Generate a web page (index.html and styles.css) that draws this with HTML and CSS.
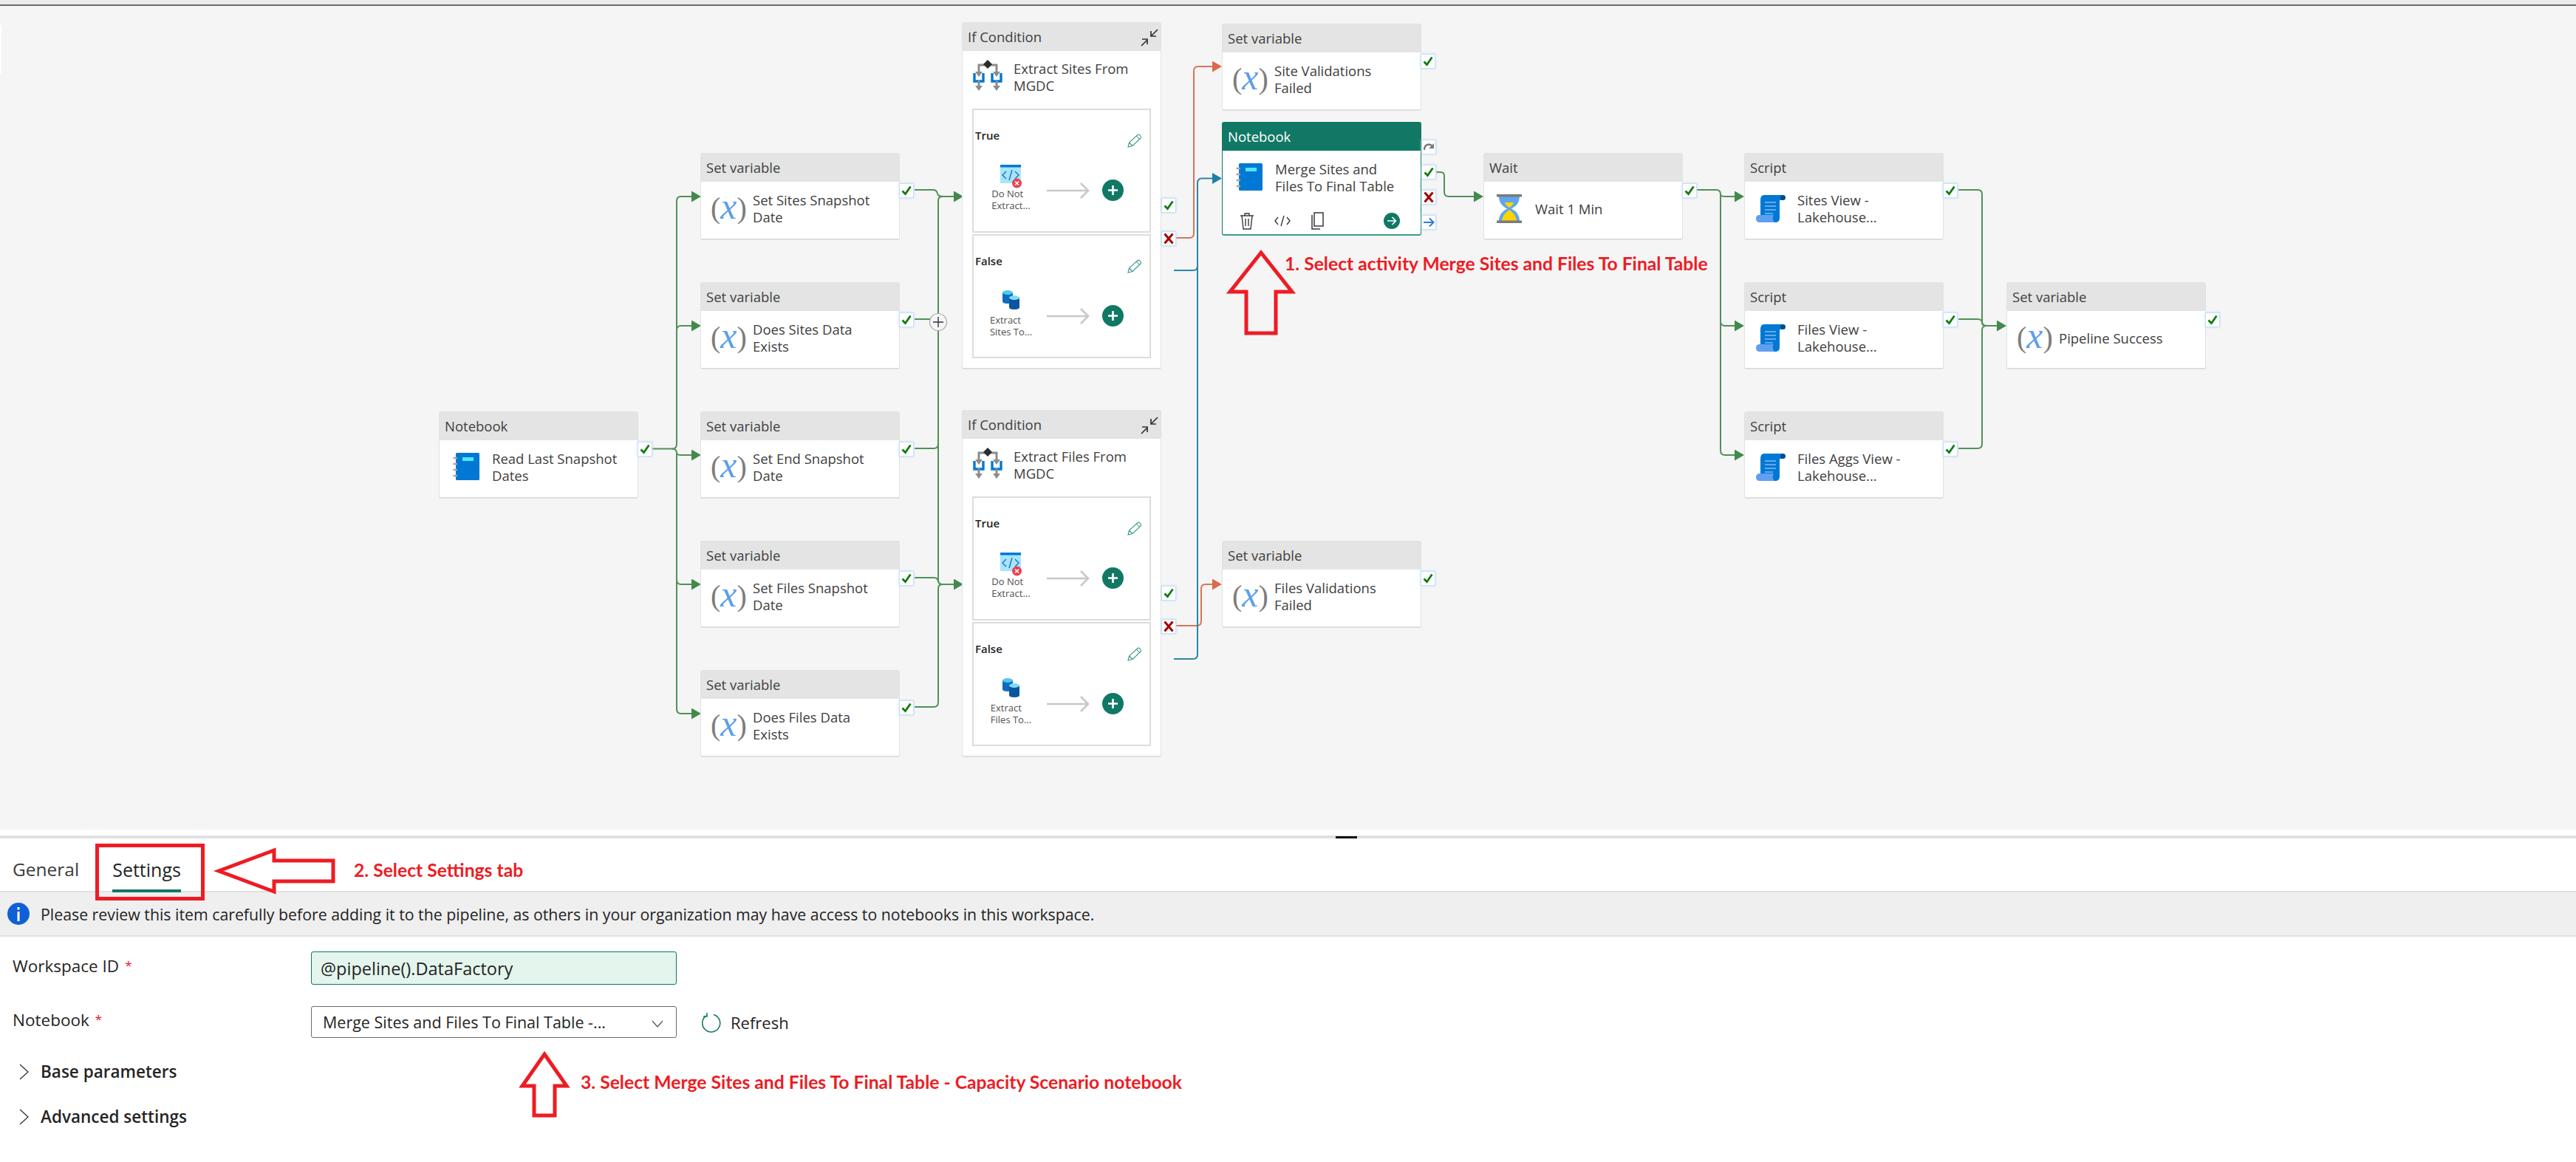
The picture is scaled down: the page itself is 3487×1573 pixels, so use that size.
FILE: index.html
```html
<!DOCTYPE html>
<html lang="en">
<head>
    <meta charset="UTF-8">
    <title>Pipeline editor</title>
    <link rel="stylesheet" href="styles.css">
</head>
<body>

    <!-- Icon sprite -->
    <svg class="sprite" width="0" height="0">
        <symbol id="i-notebook" viewBox="0 0 36 38">
            <rect x="4" y="0" width="32" height="37" rx="1.5" fill="#0078d4"/>
            <rect x="13" y="6" width="15" height="5" fill="#50e6ff"/>
            <path d="M0.5 7H6M0.5 15H6M0.5 23H6M0.5 31H6" stroke="#a6a6a6" stroke-width="2.6"/>
        </symbol>
        <symbol id="i-script" viewBox="0 0 40 38">
            <path d="M11 1H37V8H32V32Q32 38 26 38H6V8Q6 1 11 1Z" fill="#0078d4"/>
            <circle cx="36.5" cy="4.5" r="3.5" fill="#004e8c"/>
            <path d="M12 11H27M12 16H27M12 21H27M12 26H23" stroke="#83b9f9" stroke-width="1.6"/>
            <path d="M5 28H24Q21 33 25 38H5Q0 38 0 33Q0 28 5 28Z" fill="#5e9ff0"/>
        </symbol>
        <symbol id="i-hourglass" viewBox="0 0 34 39">
            <path d="M3 3H31Q31 14 20 19.5Q31 25 31 36H3Q3 25 14 19.5Q3 14 3 3Z" fill="#5ea6ee"/>
            <path d="M11 11H23Q22 15 17 18Q12 15 11 11Z" fill="#ffd400"/>
            <path d="M17 21Q26 27 27 36H7Q8 27 17 21Z" fill="#ffd400"/>
            <rect width="34" height="3.5" fill="#7a7a7a"/>
            <rect y="35.5" width="34" height="3.5" fill="#7a7a7a"/>
        </symbol>
        <symbol id="i-ifcond" viewBox="0 0 40 42">
            <path d="M8 18V7H32V18" fill="none" stroke="#8c8c8c" stroke-width="3"/>
            <path d="M3 16H13L8 23ZM27 16H37L32 23Z" fill="#8c8c8c"/>
            <path d="M20 0L26 6L20 12L14 6Z" fill="#2b2b2b"/>
            <path d="M2 18V29H14V18M26 18V29H38V18" fill="none" stroke="#0078d4" stroke-width="3.4"/>
            <path d="M8 28V36M32 28V36" stroke="#8c8c8c" stroke-width="3"/>
            <path d="M3 35H13L8 42ZM27 35H37L32 42Z" fill="#8c8c8c"/>
        </symbol>
        <symbol id="i-code" viewBox="0 0 29 32">
            <rect y="0" width="28" height="25" fill="#a6e5fb"/>
            <rect y="0" width="28" height="3.5" fill="#0078d4"/>
            <path d="M8 9L3 14L8 19M20 9L25 14L20 19M16 7L12 21" fill="none" stroke="#1a6fc0" stroke-width="1.4"/>
            <circle cx="22.5" cy="25" r="6.5" fill="#e8434f"/>
            <path d="M20 22.5L25 27.5M25 22.5L20 27.5" stroke="#fff" stroke-width="1.5"/>
        </symbol>
        <symbol id="i-db" viewBox="0 0 23 26">
            <path d="M0 3V15Q0 18 7 18Q14 18 14 15V3Z" fill="#0f6cbd"/>
            <ellipse cx="7" cy="3" rx="7" ry="3" fill="#50c8f0"/>
            <path d="M9 10V23Q9 26 16 26Q23 26 23 23V10Z" fill="#0b559f"/>
            <ellipse cx="16" cy="10" rx="7" ry="3" fill="#7fdcf8"/>
        </symbol>
        <symbol id="i-pencil" viewBox="0 0 20 19">
            <path d="M1 18L2.5 12L14 1.5Q15.5 .5 17 2L18 3.5Q19 5 18 6L7 16.5ZM2.5 12L7 16.5M12.5 3L16.5 7.5" fill="none" stroke="#3f9a8c" stroke-width="1.1"/>
        </symbol>
        <symbol id="i-add" viewBox="0 0 29 29">
            <circle cx="14.5" cy="14.5" r="14.5" fill="#117865"/>
            <path d="M14.5 8V21M8 14.5H21" stroke="#fff" stroke-width="2.6"/>
        </symbol>
        <symbol id="i-flow" viewBox="0 0 58 22">
            <path d="M0 11H56M46 1L56 11L46 21" fill="none" stroke="#c8c8c8" stroke-width="2.6"/>
        </symbol>
        <symbol id="i-collapse" viewBox="0 0 24 24">
            <path d="M23 1L14 10M14 3V10H21M1 23L9 15M2 14H9V21" fill="none" stroke="#323232" stroke-width="1.7"/>
        </symbol>
        <symbol id="i-check" viewBox="0 0 18 18">
            <path d="M3.5 9.5L7.5 13.5L14.5 3.5" fill="none" stroke="#107c10" stroke-width="2.8"/>
        </symbol>
        <symbol id="i-cross" viewBox="0 0 18 18">
            <path d="M3.5 2.5L14.5 15.5M14.5 2.5L3.5 15.5" stroke="#a80000" stroke-width="3"/>
        </symbol>
        <symbol id="i-skip" viewBox="0 0 18 18">
            <path d="M3 13Q3 6 9 5.5Q12 5.5 14 8" fill="none" stroke="#7a7a7a" stroke-width="2.4"/>
            <path d="M16 4V11H9Z" fill="#7a7a7a"/>
        </symbol>
        <symbol id="i-next" viewBox="0 0 18 18">
            <path d="M2 9H15M10 3.5L15.5 9L10 14.5" fill="none" stroke="#2b7cd3" stroke-width="2"/>
        </symbol>
    </svg>

    <div class="topbar"></div>

    <!-- Pipeline canvas -->
    <div class="canvas">
        <div class="side-tab"></div>

        <!-- Connectors -->
        <svg class="wires" viewBox="0 8 3487 1115" width="3487" height="1115">
            <defs>
                <marker id="tip-green" markerUnits="userSpaceOnUse" markerWidth="13" markerHeight="15" refX="0" refY="7.5" orient="auto"><path d="M0 0L13 7.5L0 15Z" fill="#43894e"/></marker>
                <marker id="tip-red" markerUnits="userSpaceOnUse" markerWidth="13" markerHeight="15" refX="0" refY="7.5" orient="auto"><path d="M0 0L13 7.5L0 15Z" fill="#d96b4b"/></marker>
                <marker id="tip-blue" markerUnits="userSpaceOnUse" markerWidth="13" markerHeight="15" refX="0" refY="7.5" orient="auto"><path d="M0 0L13 7.5L0 15Z" fill="#1f7fa6"/></marker>
            </defs>
            <g class="wire wire-green">
                <path d="M883 607.5H910Q916 607.5 916 601V272Q916 266 922 266H936" marker-end="url(#tip-green)"/>
                <path d="M916 447Q916 441 922 441H936" marker-end="url(#tip-green)"/>
                <path d="M910 607.5Q916 607.5 916 613Q916 616 922 616H936" marker-end="url(#tip-green)"/>
                <path d="M916 613V785Q916 791 922 791H936" marker-end="url(#tip-green)"/>
                <path d="M916 785V960Q916 966 922 966H936" marker-end="url(#tip-green)"/>

                <path d="M1238 257H1263Q1268 257 1269 262Q1270 266 1276 266H1291" marker-end="url(#tip-green)"/>
                <path d="M1276 266Q1270 266 1270 272V785Q1270 791 1276 791H1291" marker-end="url(#tip-green)"/>
                <path d="M1238 432H1260"/>
                <path d="M1238 607H1264Q1270 607 1270 601"/>
                <path d="M1238 782H1264Q1270 782 1270 788"/>
                <path d="M1238 957H1264Q1270 957 1270 951V797Q1270 791 1276 791"/>

                <path d="M1943 233H1950Q1955 233 1955 238V260Q1955 266 1961 266H1995" marker-end="url(#tip-green)"/>

                <path d="M2297 257H2323Q2329 257 2329 263Q2329 266 2335 266H2348" marker-end="url(#tip-green)"/>
                <path d="M2329 263V435Q2329 441 2335 441H2348" marker-end="url(#tip-green)"/>
                <path d="M2329 435V610Q2329 616 2335 616H2348" marker-end="url(#tip-green)"/>

                <path d="M2651 257H2677Q2683 257 2683 263V435Q2683 441 2689 441H2703" marker-end="url(#tip-green)"/>
                <path d="M2651 432H2677Q2683 432 2683 437Q2683 441 2689 441"/>
                <path d="M2651 607H2677Q2683 607 2683 601V447Q2683 441 2689 441"/>
            </g>
            <g class="wire wire-red">
                <path d="M1589 322H1610Q1616 322 1616 316V96Q1616 90 1622 90H1641" marker-end="url(#tip-red)"/>
                <path d="M1589 847H1620Q1626 847 1626 841V797Q1626 791 1632 791H1641" marker-end="url(#tip-red)"/>
            </g>
            <g class="wire wire-blue">
                <path d="M1589 366H1615Q1621 366 1621 360V248Q1621 241.500 1627 241.500H1641" marker-end="url(#tip-blue)"/>
                <path d="M1589 892H1615Q1621 892 1621 886V248"/>
            </g>
            <circle class="junction" cx="1270" cy="436" r="11.500"/>
            <path class="junction-plus" d="M1270 429V443M1263 436H1277"/>
        </svg>

        <!-- Activities -->
        <div class="node col-read row-3">
            <div class="node-head">Notebook</div>
            <div class="node-body"><svg class="ico-notebook"><use href="#i-notebook"/></svg><div class="node-name">Read Last Snapshot<br>Dates</div></div>
            <div class="ports"><span class="port"><svg><use href="#i-check"/></svg></span></div>
        </div>

        <div class="node col-vars row-1">
            <div class="node-head">Set variable</div>
            <div class="node-body"><span class="ico-var">(<i>x</i>)</span><div class="node-name">Set Sites Snapshot<br>Date</div></div>
            <div class="ports"><span class="port"><svg><use href="#i-check"/></svg></span></div>
        </div>
        <div class="node col-vars row-2">
            <div class="node-head">Set variable</div>
            <div class="node-body"><span class="ico-var">(<i>x</i>)</span><div class="node-name">Does Sites Data<br>Exists</div></div>
            <div class="ports"><span class="port"><svg><use href="#i-check"/></svg></span></div>
        </div>
        <div class="node col-vars row-3">
            <div class="node-head">Set variable</div>
            <div class="node-body"><span class="ico-var">(<i>x</i>)</span><div class="node-name">Set End Snapshot<br>Date</div></div>
            <div class="ports"><span class="port"><svg><use href="#i-check"/></svg></span></div>
        </div>
        <div class="node col-vars row-4">
            <div class="node-head">Set variable</div>
            <div class="node-body"><span class="ico-var">(<i>x</i>)</span><div class="node-name">Set Files Snapshot<br>Date</div></div>
            <div class="ports"><span class="port"><svg><use href="#i-check"/></svg></span></div>
        </div>
        <div class="node col-vars row-5">
            <div class="node-head">Set variable</div>
            <div class="node-body"><span class="ico-var">(<i>x</i>)</span><div class="node-name">Does Files Data<br>Exists</div></div>
            <div class="ports"><span class="port"><svg><use href="#i-check"/></svg></span></div>
        </div>

        <!-- If conditions -->
        <div class="node node-if col-if row-if1">
            <div class="node-head">If Condition<svg class="ico-collapse"><use href="#i-collapse"/></svg></div>
            <div class="if-title"><svg class="ico-ifcond"><use href="#i-ifcond"/></svg><div class="node-name">Extract Sites From<br>MGDC</div></div>
            <div class="branch">
                <div class="branch-head"><strong>True</strong><svg class="ico-pencil"><use href="#i-pencil"/></svg></div>
                <div class="branch-body">
                    <div class="branch-item"><svg class="ico-code"><use href="#i-code"/></svg><div class="item-label">Do Not<br>Extract...</div></div>
                    <div class="branch-go"><svg class="ico-flow"><use href="#i-flow"/></svg><svg class="ico-add"><use href="#i-add"/></svg></div>
                </div>
            </div>
            <div class="branch">
                <div class="branch-head"><strong>False</strong><svg class="ico-pencil"><use href="#i-pencil"/></svg></div>
                <div class="branch-body">
                    <div class="branch-item"><svg class="ico-db"><use href="#i-db"/></svg><div class="item-label">Extract<br>Sites To...</div></div>
                    <div class="branch-go"><svg class="ico-flow"><use href="#i-flow"/></svg><svg class="ico-add"><use href="#i-add"/></svg></div>
                </div>
            </div>
            <div class="ports ports-if">
                <span class="port"><svg><use href="#i-check"/></svg></span>
                <span class="port"><svg><use href="#i-cross"/></svg></span>
            </div>
        </div>
        <div class="node node-if col-if row-if2">
            <div class="node-head">If Condition<svg class="ico-collapse"><use href="#i-collapse"/></svg></div>
            <div class="if-title"><svg class="ico-ifcond"><use href="#i-ifcond"/></svg><div class="node-name">Extract Files From<br>MGDC</div></div>
            <div class="branch">
                <div class="branch-head"><strong>True</strong><svg class="ico-pencil"><use href="#i-pencil"/></svg></div>
                <div class="branch-body">
                    <div class="branch-item"><svg class="ico-code"><use href="#i-code"/></svg><div class="item-label">Do Not<br>Extract...</div></div>
                    <div class="branch-go"><svg class="ico-flow"><use href="#i-flow"/></svg><svg class="ico-add"><use href="#i-add"/></svg></div>
                </div>
            </div>
            <div class="branch">
                <div class="branch-head"><strong>False</strong><svg class="ico-pencil"><use href="#i-pencil"/></svg></div>
                <div class="branch-body">
                    <div class="branch-item"><svg class="ico-db"><use href="#i-db"/></svg><div class="item-label">Extract<br>Files To...</div></div>
                    <div class="branch-go"><svg class="ico-flow"><use href="#i-flow"/></svg><svg class="ico-add"><use href="#i-add"/></svg></div>
                </div>
            </div>
            <div class="ports ports-if">
                <span class="port"><svg><use href="#i-check"/></svg></span>
                <span class="port"><svg><use href="#i-cross"/></svg></span>
            </div>
        </div>

        <div class="node col-val row-site">
            <div class="node-head">Set variable</div>
            <div class="node-body"><span class="ico-var">(<i>x</i>)</span><div class="node-name">Site Validations<br>Failed</div></div>
            <div class="ports"><span class="port"><svg><use href="#i-check"/></svg></span></div>
        </div>

        <!-- Selected activity -->
        <div class="node node-selected col-val row-sel">
            <div class="node-head">Notebook</div>
            <div class="node-body"><svg class="ico-notebook"><use href="#i-notebook"/></svg><div class="node-name">Merge Sites and<br>Files To Final Table</div></div>
            <div class="node-tools">
                <svg class="tool-trash" viewBox="0 0 20 24"><path d="M1 5H19M7 5V2H13V5M3 5L5 23H15L17 5M8 9V19M12 9V19" fill="none" stroke="#3a3a3a" stroke-width="1.4"/></svg>
                <svg class="tool-code" viewBox="0 0 22 16"><path d="M5 3L1 8L5 13M17 3L21 8L17 13M13 1L9 15" fill="none" stroke="#3a3a3a" stroke-width="1.4"/></svg>
                <svg class="tool-copy" viewBox="0 0 18 24"><path d="M5 1H17V19H5ZM2 4V23H13" fill="none" stroke="#3a3a3a" stroke-width="1.5"/></svg>
                <svg class="tool-go" viewBox="0 0 22 22"><circle cx="11" cy="11" r="11" fill="#117865"/><path d="M5 11H16M11.500 6L16.500 11L11.500 16" fill="none" stroke="#fff" stroke-width="1.7"/></svg>
            </div>
            <div class="ports ports-selected">
                <span class="port"><svg><use href="#i-skip"/></svg></span>
                <span class="port"><svg><use href="#i-check"/></svg></span>
                <span class="port"><svg><use href="#i-cross"/></svg></span>
                <span class="port"><svg><use href="#i-next"/></svg></span>
            </div>
        </div>

        <div class="node col-val row-4">
            <div class="node-head">Set variable</div>
            <div class="node-body"><span class="ico-var">(<i>x</i>)</span><div class="node-name">Files Validations<br>Failed</div></div>
            <div class="ports"><span class="port"><svg><use href="#i-check"/></svg></span></div>
        </div>

        <div class="node col-wait row-1">
            <div class="node-head">Wait</div>
            <div class="node-body"><svg class="ico-hourglass"><use href="#i-hourglass"/></svg><div class="node-name">Wait 1 Min</div></div>
            <div class="ports"><span class="port"><svg><use href="#i-check"/></svg></span></div>
        </div>

        <div class="node col-script row-1">
            <div class="node-head">Script</div>
            <div class="node-body"><svg class="ico-script"><use href="#i-script"/></svg><div class="node-name">Sites View -<br>Lakehouse...</div></div>
            <div class="ports"><span class="port"><svg><use href="#i-check"/></svg></span></div>
        </div>
        <div class="node col-script row-2">
            <div class="node-head">Script</div>
            <div class="node-body"><svg class="ico-script"><use href="#i-script"/></svg><div class="node-name">Files View -<br>Lakehouse...</div></div>
            <div class="ports"><span class="port"><svg><use href="#i-check"/></svg></span></div>
        </div>
        <div class="node col-script row-3">
            <div class="node-head">Script</div>
            <div class="node-body"><svg class="ico-script"><use href="#i-script"/></svg><div class="node-name">Files Aggs View -<br>Lakehouse...</div></div>
            <div class="ports"><span class="port"><svg><use href="#i-check"/></svg></span></div>
        </div>

        <div class="node col-end row-2">
            <div class="node-head">Set variable</div>
            <div class="node-body"><span class="ico-var">(<i>x</i>)</span><div class="node-name">Pipeline Success</div></div>
            <div class="ports"><span class="port"><svg><use href="#i-check"/></svg></span></div>
        </div>
    </div>

    <!-- Properties panel -->
    <div class="panel">
        <div class="splitter-handle"></div>
        <div class="tabs">
            <div class="tab">General</div>
            <div class="tab tab-active">Settings</div>
        </div>
        <div class="message">
            <svg class="message-icon" viewBox="0 0 30 30"><circle cx="15" cy="15" r="15" fill="#0f5fd7"/><rect x="13.500" y="12" width="3" height="13" fill="#fff"/><rect x="13.500" y="6" width="3" height="3.500" fill="#fff"/></svg>
            <span>Please review this item carefully before adding it to the pipeline, as others in your organization may have access to notebooks in this workspace.</span>
        </div>
        <div class="form">
            <div class="form-row form-row-workspace">
                <label class="form-label">Workspace ID<span class="required">*</span></label>
                <div class="field field-dynamic">@pipeline().DataFactory</div>
            </div>
            <div class="form-row form-row-notebook">
                <label class="form-label">Notebook<span class="required">*</span></label>
                <div class="field field-select">
                    <span>Merge Sites and Files To Final Table -...</span>
                    <svg class="select-caret" viewBox="0 0 16 10"><path d="M1 1L8 9L15 1" fill="none" stroke="#555" stroke-width="1.2"/></svg>
                </div>
                <div class="refresh">
                    <svg class="refresh-icon" viewBox="0 0 28 28"><path d="M17 3.500A12 12 0 1 1 8 4.500M8 1V6H3" fill="none" stroke="#117865" stroke-width="1.500"/></svg>
                    <span>Refresh</span>
                </div>
            </div>
            <div class="sections">
                <div class="section-row"><svg class="section-caret" viewBox="0 0 13 22"><path d="M1 1L12 11L1 21" fill="none" stroke="#333" stroke-width="1.3"/></svg>Base parameters</div>
                <div class="section-row"><svg class="section-caret" viewBox="0 0 13 22"><path d="M1 1L12 11L1 21" fill="none" stroke="#333" stroke-width="1.3"/></svg>Advanced settings</div>
            </div>
        </div>
    </div>

    <!-- Red annotations on top of the screenshot -->
    <svg class="marks" width="3487" height="1573">
        <path d="M1707 342L1749 395H1727V451H1687V395H1665Z"/>
        <rect x="131.500" y="1144.500" width="143" height="72"/>
        <path d="M296 1179L371 1151V1165H451V1193H371V1207Z"/>
        <path d="M737 1427L767 1470H751V1510H723V1470H707Z"/>
    </svg>
    <div class="note note-one">1. Select activity Merge Sites and Files To Final Table</div>
    <div class="note note-two">2. Select Settings tab</div>
    <div class="note note-three">3. Select Merge Sites and Files To Final Table - Capacity Scenario notebook</div>

</body>
</html>
```

FILE: styles.css
```css
/* Base styling */
html, body {
    margin: 0;
    padding: 0;
}

body {
    position: relative;
    width: 3487px;
    height: 1573px;
    overflow: hidden;
    background: #fff;
    font-family: "Open Sans", sans-serif;
    color: #323232;
}

.sprite {
    position: absolute;
}

.topbar {
    height: 6px;
    background: #ebebeb;
    border-bottom: 2px solid #6b6b6b;
}

/* Canvas */
.canvas {
    position: relative;
    height: 1115px;
    background: #f5f5f5;
}

.side-tab {
    position: absolute;
    left: 0;
    top: 26px;
    width: 2px;
    height: 66px;
    background: #fff;
}

.wires {
    position: absolute;
    left: 0;
    top: 0;
}

.wire path {
    fill: none;
    stroke-width: 2;
}

.wire-green path { stroke: #4f9159; }
.wire-red path { stroke: #d9745a; }
.wire-blue path { stroke: #2a86a8; }

.junction {
    fill: #f5f5f5;
    stroke: #a8a8a8;
    stroke-width: 1.2;
}

.junction-plus {
    fill: none;
    stroke: #333;
    stroke-width: 1.4;
}

/* Activity cards */
.node {
    position: absolute;
    width: 270px;
    height: 118px;
    box-sizing: border-box;
    background: #fff;
    border: 1px solid #e2e2e2;
    border-bottom: 2px solid #dedede;
    border-radius: 3px;
    font-size: 18.500px;
    color: #404040;
}

.node-head {
    position: relative;
    height: 38px;
    line-height: 38px;
    padding-left: 7px;
    background: #e4e4e4;
}

.node-body {
    display: flex;
    align-items: center;
    height: 72px;
    padding-left: 13px;
}

.node-name {
    line-height: 23px;
    white-space: nowrap;
}

.col-read { left: 594px; }
.col-vars { left: 948px; }
.col-if { left: 1302px; }
.col-val { left: 1654px; }
.col-wait { left: 2008px; }
.col-script { left: 2361px; }
.col-end { left: 2716px; }

.row-1 { top: 199px; }
.row-2 { top: 374px; }
.row-3 { top: 549px; }
.row-4 { top: 724px; }
.row-5 { top: 899px; }
.row-site { top: 24px; }
.row-sel { top: 157px; }
.row-if1 { top: 22px; }
.row-if2 { top: 547px; }

/* Card icons */
.ico-var {
    display: flex;
    justify-content: space-between;
    align-items: center;
    flex: none;
    width: 44px;
    height: 36px;
    margin-right: 13px;
    font-family: "Liberation Serif", serif;
    font-size: 40px;
    line-height: 36px;
    color: #7d7d7d;
}

.ico-var i {
    margin-top: -7px;
    font-size: 50px;
    color: #5b9fec;
}

.ico-notebook { width: 36px; height: 38px; margin-left: 5px; margin-right: 17px; }
.ico-hourglass { width: 34px; height: 39px; margin-left: 4px; margin-right: 18px; }
.ico-script { width: 40px; height: 38px; margin-left: 2px; margin-right: 16px; }
.ico-ifcond { width: 40px; height: 42px; flex: none; }
.ico-code { display: block; width: 29px; height: 32px; margin: 0 auto -1px; }
.ico-db { display: block; width: 23px; height: 26px; margin: 0 auto 6px; }
.ico-pencil { width: 20px; height: 19px; margin-top: 10px; }
.ico-add { width: 29px; height: 29px; }
.ico-flow { width: 58px; height: 22px; }

.ico-collapse {
    position: absolute;
    right: 3px;
    top: 8px;
    width: 24px;
    height: 24px;
}

/* Status ports beside a card */
.ports {
    position: absolute;
    left: 100%;
    top: 41px;
    margin-left: 1px;
    display: flex;
    flex-direction: column;
}

.port {
    display: flex;
    width: 18px;
    height: 18px;
    background: #fff;
    box-shadow: 0 0 0 1px #c7e0f4, 0 0 3px 1px #bcdcf5;
}

.port svg {
    width: 18px;
    height: 18px;
}

.ports-if {
    top: 238px;
    margin-left: 2px;
    gap: 27px;
}

.ports-selected {
    top: 24px;
    margin-left: 2px;
    gap: 16px;
}

/* If condition container */
.node-if {
    height: 470px;
}

.if-title {
    display: flex;
    height: 78px;
    box-sizing: border-box;
    gap: 15px;
    padding: 12px 0 0 14px;
}

.branch {
    box-sizing: border-box;
    height: 168px;
    margin: 0 13px 2px;
    border: 2px solid #dcdcdc;
    font-size: 14px;
}

.branch-head {
    display: flex;
    justify-content: space-between;
    height: 24px;
    margin-top: 22px;
    padding: 0 10px 0 2px;
    line-height: 24px;
    color: #252525;
}

.branch-head strong {
    font-size: 15px;
    font-weight: 600;
}

.branch-body {
    display: flex;
    margin-top: 28px;
}

.branch-item {
    width: 97px;
    margin-left: 2px;
}

.item-label {
    width: fit-content;
    margin: 0 auto;
    font-size: 13px;
    line-height: 16px;
    color: #505050;
}

.branch-go {
    display: flex;
    align-items: center;
    gap: 17px;
    height: 29px;
    margin-top: 20px;
}

/* Selected card */
.node-selected {
    height: 154px;
    border: 1px solid #117865;
    border-bottom: 2px solid #3f9a8c;
}

.node-selected .node-head {
    background: #117865;
    color: #fff;
}

.node-tools {
    display: flex;
    align-items: center;
    height: 24px;
    margin-top: 11px;
    padding-left: 23px;
}

.tool-trash { width: 20px; height: 24px; margin-right: 27px; }
.tool-code { width: 22px; height: 16px; margin-right: 27px; }
.tool-copy { width: 18px; height: 24px; margin-right: 81px; }
.tool-go { width: 22px; height: 22px; }

/* Properties panel */
.panel {
    position: relative;
    margin-top: 8px;
    border-top: 4px solid #e1e1e1;
    font-size: 21.300px;
    color: #242424;
}

.splitter-handle {
    position: absolute;
    left: 1808px;
    top: -3px;
    width: 29px;
    height: 3px;
    background: #111;
}

.tabs {
    display: flex;
    gap: 45px;
    height: 73px;
    padding-left: 17px;
    box-sizing: border-box;
    border-bottom: 2px solid #e1e1e1;
}

.tab {
    height: 73px;
    box-sizing: border-box;
    padding-top: 25px;
    font-size: 24.500px;
    line-height: 34px;
    color: #3b3b3b;
}

.tab-active {
    border-bottom: 4px solid #117865;
    font-size: 25px;
    font-weight: 500;
    color: #242424;
}

.message {
    display: flex;
    align-items: center;
    gap: 15px;
    height: 60px;
    box-sizing: border-box;
    padding-left: 10px;
    background: #efefef;
    border-bottom: 2px solid #e1e1e1;
}

.message-icon {
    width: 30px;
    height: 30px;
}

.form {
    padding: 20px 0 0 17px;
}

.form-row {
    display: flex;
    align-items: center;
}

.form-row-notebook {
    margin-top: 29px;
}

.form-label {
    width: 404px;
    margin-top: -6px;
    font-size: 22.500px;
    font-weight: 500;
}

.required {
    margin-left: 8px;
    color: #e81123;
    vertical-align: 3px;
    font-size: 17px;
}

.field {
    box-sizing: border-box;
    width: 495px;
    border-radius: 3px;
}

.field-dynamic {
    height: 45px;
    line-height: 45px;
    padding-left: 12px;
    background: #e3f5ec;
    border: 1.5px solid #117865;
    font-size: 23.500px;
    font-weight: 500;
}

.field-select {
    display: flex;
    justify-content: space-between;
    align-items: center;
    height: 43px;
    padding: 0 17px 0 15px;
    border: 1.5px solid #6b6b6b;
    font-size: 21.500px;
}

.select-caret {
    width: 16px;
    height: 10px;
    margin-top: 4px;
}

.refresh {
    display: flex;
    align-items: center;
    gap: 12px;
    margin-left: 33px;
    font-size: 22px;
}

.refresh-icon {
    width: 28px;
    height: 28px;
}

.sections {
    margin-top: 15px;
}

.section-row {
    display: flex;
    align-items: center;
    gap: 16px;
    height: 61px;
    font-size: 22.500px;
    font-weight: 600;
}

.section-caret {
    width: 13px;
    height: 22px;
    margin-left: 9px;
}

/* Annotations */
.marks {
    position: absolute;
    left: 0;
    top: 0;
}

.marks path,
.marks rect {
    fill: none;
    stroke: #ed1c24;
    stroke-width: 5;
}

.note {
    position: absolute;
    font-family: "Lato", sans-serif;
    font-weight: 700;
    font-size: 24.700px;
    line-height: 30px;
    color: #ed1c24;
    white-space: nowrap;
}

.note-one { left: 1739px; top: 342px; }
.note-two { left: 479px; top: 1163px; }
.note-three { left: 786px; top: 1450px; }
```
